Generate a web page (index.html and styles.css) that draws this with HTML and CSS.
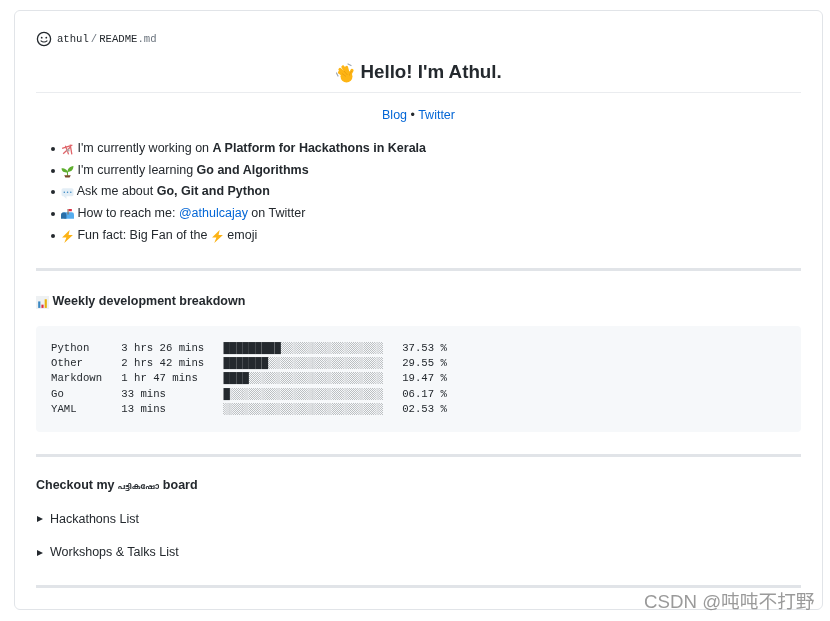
FILE: index.html
```html
<!DOCTYPE html>
<html lang="en">
<head>
<meta charset="utf-8">
<title>README</title>
<link rel="stylesheet" href="styles.css">
</head>
<body>
<div class="card">
  <div class="file-head">
    <svg class="smiley" viewBox="0 0 16 16" width="16" height="16"><circle cx="8" cy="8" r="6.6" fill="none" stroke="#24292e" stroke-width="1.3"/><circle cx="5.7" cy="6.7" r=".9" fill="#24292e"/><circle cx="10.3" cy="6.7" r=".9" fill="#24292e"/><path d="M5 9.800c1.500 1.600 4.500 1.600 6 0" fill="none" stroke="#24292e" stroke-width="1.100" stroke-linecap="round"/></svg>
    <span class="path">athul<span class="slash">/</span>README<span class="ext">.md</span></span>
  </div>
  <h1 class="title"><svg class="wave" viewBox="0 0 20 20" width="20" height="20"><path d="M1.500 10 3 13M13 1l3 1.500" stroke="#9fa9b2" stroke-width="1.200" stroke-linecap="round" fill="none"/><g stroke="#fdb515" stroke-width="3.200" stroke-linecap="round" fill="none"><path d="M10 13 4.500 9.500"/><path d="M11 12 5 6.500"/><path d="M12 11 8 4"/><path d="M13 10 11.500 4.500"/><path d="M14 13 17 7.500"/></g><circle cx="11.500" cy="13.500" r="6" fill="#fdb515"/><path d="M7 10.500l4 3M9 8l3.500 4M17 8c-1.500 1.500-2.500 3-2.500 4.500" stroke="#e8990c" stroke-width=".7" fill="none"/></svg> Hello! I'm Athul.</h1>
  <p class="links"><a href="#">Blog</a> • <a href="#">Twitter</a></p>
  <ul class="facts">
    <li><svg class="emoji" viewBox="0 0 12 12"><path d="M1 5 10.500 2M2 10 8.500 4M4 2.500l3 8M8.500 1.500l1.500 9" stroke="#e0656a" stroke-width="1.200" fill="none"/><path d="M5 6 7.500 5 8 7.500 5.500 8Z" fill="#b5a8a8"/></svg> I'm currently working on <strong>A Platform for Hackathons in Kerala</strong></li>
    <li><svg class="emoji" viewBox="0 0 12 12"><path d="M6 7C6 4.500 4 3 .5 3c0 3 2.300 4 5.500 4ZM6 6.500C6 3.500 8 1.500 11.500 1 11.500 4.500 9.500 6.500 6 6.500Z" fill="#5fae2f"/><path d="M5.500 6h1v4h-1Z" fill="#5fae2f"/><path d="M3 9.500h6L8 11.500H4Z" fill="#7a4b2a"/></svg> I'm currently learning <strong>Go and Algorithms</strong></li>
    <li><svg class="emoji" viewBox="0 0 12 12"><rect x=".5" y="2" width="11" height="7.500" rx="1.500" fill="#e3eef6"/><path d="M2 9h3v3Z" fill="#e3eef6"/><path d="M3 5.800h.1M6 5.800h.1M9 5.800h.1" stroke="#3b88c3" stroke-width="1.300" stroke-linecap="round"/></svg> Ask me about <strong>Go, Git and Python</strong></li>
    <li><svg class="emoji" viewBox="0 0 12 12"><path d="M3 4h7a2 2 0 0 1 2 2v4H3Z" fill="#55acee"/><path d="M0 6.500a2.500 2.500 0 0 1 5 0V10H0Z" fill="#2a6fa8"/><path d="M6 1h1v5H6Z" fill="#8a6a50"/><path d="M7 1h3v2H7Z" fill="#dd2e44"/></svg> How to reach me: <a href="#">@athulcajay</a> on Twitter</li>
    <li><svg class="emoji" viewBox="0 0 12 12"><path d="M8 0 1 7h4L3 12l8-7.500H7Z" fill="#fcb316"/></svg> Fun fact: Big Fan of the <svg class="emoji" viewBox="0 0 12 12"><path d="M8 0 1 7h4L3 12l8-7.500H7Z" fill="#fcb316"/></svg> emoji</li>
  </ul>
  <hr class="rule">
  <h3 class="section"><svg class="emoji" viewBox="0 0 12 12"><rect width="12" height="12" fill="#eef1f3"/><path d="M2 5h2v6H2Z" fill="#3b88c3"/><path d="M5 8h2v3H5Z" fill="#dd2e44"/><path d="M8 3h2v8H8Z" fill="#e8b10e"/></svg> Weekly development breakdown</h3>
  <pre class="stats">Python     3 hrs 26 mins   █████████░░░░░░░░░░░░░░░░   37.53 %
Other      2 hrs 42 mins   ███████░░░░░░░░░░░░░░░░░░   29.55 %
Markdown   1 hr 47 mins    ████░░░░░░░░░░░░░░░░░░░░░   19.47 %
Go         33 mins         █░░░░░░░░░░░░░░░░░░░░░░░░   06.17 %
YAML       13 mins         ░░░░░░░░░░░░░░░░░░░░░░░░░   02.53 %</pre>
  <hr class="rule">
  <p class="board"><strong>Checkout my <span class="mal">പട്ടികഷോ</span> board</strong></p>
  <details class="fold"><summary>Hackathons List</summary></details>
  <details class="fold"><summary>Workshops &amp; Talks List</summary></details>
  <hr class="rule">
</div>
<div class="watermark">CSDN @吨吨不打野</div>
</body>
</html>
```
FILE: styles.css
```css
* { box-sizing: border-box; }
html, body { margin: 0; height: 100%; }
body {
  position: relative;
  height: 621px;
  overflow: hidden;
  background: #fff;
  padding: 10px 7px 11px 14px;
  font-family: "Liberation Sans", Arial, sans-serif;
  font-size: 12.5px;
  line-height: 18.75px;
  color: #24292e;
}
.card {
  height: 600px;
  border: 1px solid #e1e4e8;
  border-radius: 6px;
  padding: 20px 21px 0;
  overflow: hidden;
  will-change: opacity;
}
.file-head { display: flex; align-items: center; height: 16px; }
.smiley { margin-right: 5px; flex: none; }
.path { font-family: "Liberation Mono", monospace; font-size: 10.625px; color: #24292e; }
.slash { color: #6a737d; margin: 0 2px; }
.ext { color: #6a737d; }
.title {
  margin: 11px 0 0;
  height: 35px;
  padding-top: 1px;
  border-bottom: 1px solid #eaecef;
  text-align: center;
  font-size: 18.75px;
  line-height: 26px;
  font-weight: 700;
}
.wave { vertical-align: -5px; }
.links { margin: 13px 0 0; text-align: center; }
a { color: #0366d6; text-decoration: none; }
.facts { margin: 14px 0 0; padding: 0 0 0 24px; list-style: none; }
.facts li { height: 18.75px; line-height: 18.75px; margin-bottom: 3px; }
.facts li::before {
  content: "";
  display: inline-block;
  width: 4px;
  height: 4px;
  margin-left: -9px;
  margin-right: 6px;
  border-radius: 50%;
  background: #24292e;
  vertical-align: 1px;
}
.facts strong, .section, .board strong { font-weight: 700; }
.emoji { width: 13px; height: 13px; vertical-align: -4px; }
.rule { margin: 0; height: 3px; border: 0; background: #e1e4e8; }
.facts + .rule { margin-top: 23px; }
.section { margin: 21px 0 0; font-size: 12.5px; line-height: 18.75px; }
.stats {
  margin: 16px 0 0;
  height: 106px;
  padding: 14.5px 15px;
  background: #f6f8fa;
  border-radius: 4px;
  font-family: "Liberation Mono", monospace;
  font-size: 10.65px;
  line-height: 15.3px;
  color: #24292e;
  overflow: hidden;
}
.stats + .rule { margin-top: 22px; }
.board { margin: 19px 0 0; }
.mal { font-family: "Noto Sans", "Noto Sans Malayalam", sans-serif; font-size: 7.5px; }
.board + .fold { margin-top: 14px; }
.fold + .fold { margin-top: 14.5px; }
.fold summary { cursor: pointer; list-style: none; display: flex; align-items: center; gap: 7px; }
.fold summary::-webkit-details-marker { display: none; }
.fold summary::before {
  content: "";
  width: 0;
  height: 0;
  margin-left: 1px;
  border-left: 6px solid #24292e;
  border-top: 3.5px solid transparent;
  border-bottom: 3.5px solid transparent;
}
.fold + .rule { margin-top: 23px; }
.watermark {
  position: absolute;
  left: 644px;
  top: 590px;
  font-size: 18.7px;
  line-height: 24px;
  color: rgba(120, 120, 120, .75);
  font-family: "Liberation Sans", "Noto Sans CJK SC", sans-serif;
  white-space: nowrap;
  will-change: opacity;
}
```
